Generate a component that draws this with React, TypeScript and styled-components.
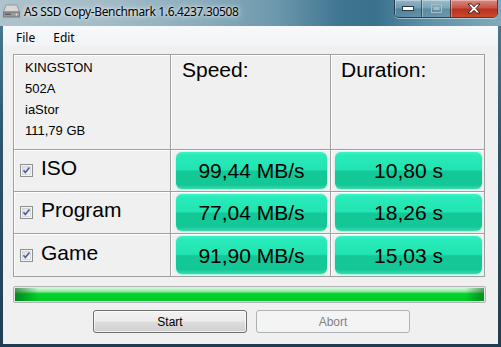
import styled, { createGlobalStyle } from 'styled-components'

const GlobalStyle = createGlobalStyle`
  html, body {
    margin: 0;
    padding: 0;
    overflow: hidden;
  }
  body {
    width: 501px;
    height: 347px;
    font-family: "Liberation Sans", Arial, sans-serif;
  }
`

const Window = styled.div`
  width: 501px;
  height: 347px;
  display: flex;
  flex-direction: column;
  background: linear-gradient(180deg, #4f7f97 0%, #2d5670 40%, #1f3d52 100%);
`

const TitleBar = styled.div`
  height: 26px;
  flex: none;
  display: flex;
  align-items: flex-start;
  background: linear-gradient(
    90deg,
    #aec3cc 0%,
    #a3bcc7 20%,
    #8cadbc 40%,
    #6c98ad 55%,
    #3f7591 68%,
    #3a718d 75%,
    #5e91a8 85%,
    #7faabb 100%
  );
`

const AppIcon = styled.svg`
  margin: 4px 4px 0 3px;
  flex: none;
`

const Title = styled.div`
  margin-top: 4px;
  font-family: "Noto Sans", "Open Sans", sans-serif;
  font-size: 12px;
  line-height: 16px;
  color: #000;
  letter-spacing: -0.35px;
  text-shadow: 0 0 6px rgba(255, 255, 255, 0.9), 0 0 3px rgba(255, 255, 255, 0.8);
`

const CaptionGroup = styled.div`
  margin-left: auto;
  margin-right: 3px;
  display: flex;
  height: 17px;
  border: 1px solid rgba(20, 40, 55, 0.75);
  border-top: none;
  border-radius: 0 0 5px 5px;
  overflow: hidden;
  box-shadow: 0 1px 0 rgba(255, 255, 255, 0.45);
`

const CaptionButton = styled.div<{ w: number; close?: boolean }>`
  width: ${({ w }) => w}px;
  height: 100%;
  display: flex;
  align-items: center;
  justify-content: center;
  background: ${({ close }) =>
    close
      ? 'linear-gradient(180deg, #d98a80 0%, #c9554a 45%, #b8321f 55%, #c8482e 100%)'
      : 'linear-gradient(180deg, rgba(200,220,230,0.55) 0%, rgba(150,185,200,0.45) 45%, rgba(90,130,150,0.45) 55%, rgba(110,150,170,0.5) 100%)'};
  box-shadow: inset 1px 1px 0 rgba(255, 255, 255, 0.35);
  & + & {
    border-left: 1px solid rgba(20, 40, 55, 0.6);
  }
`

const Client = styled.div`
  flex: 1;
  margin: 0 3px 3px 3px;
  background: #f0f0f0;
  display: flex;
  flex-direction: column;
`

const MenuBar = styled.div`
  height: 20px;
  box-sizing: border-box;
  padding: 2px 0 0 4px;
  flex: none;
  display: flex;
  align-items: center;
  background: linear-gradient(180deg, #f8f9fa 0%, #f1f3f6 100%);
  font-family: "Noto Sans", "Open Sans", sans-serif;
  font-size: 12px;
`

const MenuItem = styled.span`
  padding: 0 9px;
  color: #000;
`

const Content = styled.div`
  display: flex;
  flex-direction: column;
  padding: 8px 12px 11px 10px;
`

const Table = styled.div`
  display: grid;
  grid-template-columns: 156px 159px 153px;
  grid-template-rows: 94px 41px 41px 42px;
  gap: 1px;
  padding: 1px;
  width: 472px;
  box-sizing: border-box;
  background: #a0a0a0;
`

const Cell = styled.div`
  background: #f0f0f0;
  box-shadow: inset 1px 1px 0 #ffffff;
  display: flex;
  align-items: center;
  min-width: 0;
`

const InfoCell = styled(Cell)`
  flex-direction: column;
  align-items: flex-start;
  padding: 2px 0 0 11px;
  font-size: 13px;
  line-height: 21px;
  color: #000;
`

const HeaderCell = styled(Cell)<{ pad: number }>`
  align-items: flex-start;
  padding: 3px 0 0 ${({ pad }) => pad}px;
  font-size: 21px;
  line-height: 24px;
  color: #000;
`

const LabelCell = styled(Cell)`
  padding-left: 6px;
  gap: 8px;
  font-size: 21px;
  color: #000;
`

const LabelText = styled.span`
  margin-bottom: 5px;
`

const ValueCell = styled(Cell)<{ l: number; r: number }>`
  align-items: stretch;
  padding: 2px ${({ r }) => r}px 2px ${({ l }) => l}px;
`

const Pill = styled.div`
  flex: 1;
  display: flex;
  align-items: center;
  justify-content: center;
  border-radius: 6px;
  font-size: 21px;
  color: #000;
  padding-top: 1px;
  background: linear-gradient(
    180deg,
    #3af3c8 0%,
    #27ebb9 10%,
    #22e4b2 48%,
    #13c898 52%,
    #14c797 88%,
    #3ad9ad 100%
  );
  box-shadow: 0 1px 1px rgba(150, 255, 225, 0.9), 0 0 1px rgba(40, 200, 160, 0.6);
`

const Progress = styled.div`
  margin-top: 9px;
  width: 473px;
  height: 17px;
  box-sizing: border-box;
  border: 1px solid #b4b4b4;
  border-radius: 2px;
  background: #e6e6e6;
  padding: 1px;
`

const ProgressFill = styled.div`
  height: 100%;
  background:
    linear-gradient(90deg, rgba(0, 90, 20, 0.6) 0%, rgba(0, 90, 20, 0) 5%, rgba(0, 90, 20, 0) 96%, rgba(0, 90, 20, 0.55) 100%),
    linear-gradient(180deg, #d2f6d6 0%, #98eaa6 25%, #00d12a 45%, #00cc28 100%);
`

const ButtonRow = styled.div`
  margin-top: 7px;
  display: flex;
  gap: 9px;
  padding-left: 80px;
`

const Button = styled.button<{ disabled?: boolean }>`
  width: 154px;
  height: 23px;
  box-sizing: border-box;
  border-radius: 3px;
  font-family: "Liberation Sans", Arial, sans-serif;
  font-size: 12px;
  padding: 0;
  border: 1px solid ${({ disabled }) => (disabled ? '#adb2b5' : '#707070')};
  color: ${({ disabled }) => (disabled ? '#838383' : '#000')};
  background: ${({ disabled }) =>
    disabled
      ? '#f4f4f4'
      : 'linear-gradient(180deg, #f2f2f2 0%, #ebebeb 48%, #dddddd 52%, #cfcfcf 100%)'};
  box-shadow: ${({ disabled }) => (disabled ? 'none' : 'inset 0 0 0 1px rgba(255,255,255,0.7)')};
`

const Check = () => (
  <svg width="13" height="13" viewBox="0 0 13 13">
    <defs>
      <linearGradient id="cbg" x1="0" y1="0" x2="1" y2="1">
        <stop offset="0" stopColor="#dcdcdc" />
        <stop offset="1" stopColor="#fbfbfb" />
      </linearGradient>
    </defs>
    <rect x="0.5" y="0.5" width="12" height="12" fill="#f4f4f4" stroke="#8e8f8f" />
    <rect x="2.5" y="2.5" width="8" height="8" fill="url(#cbg)" stroke="#c4c6c8" strokeWidth="0.6" />
    <path d="M3.5 6.3 L5.4 8.6 L9.4 3.6" fill="none" stroke="#4a5c96" strokeWidth="1.6" />
  </svg>
)

const DriveIcon = () => (
  <AppIcon width="17" height="14" viewBox="0 0 17 14">
    <path d="M3 1 H14 L16.5 8 H0.5 Z" fill="#d7d7d7" stroke="#8a8a8a" strokeWidth="0.8" />
    <rect x="0.5" y="8" width="16" height="5" fill="#9a9a9a" stroke="#6c6c6c" strokeWidth="0.8" />
    <rect x="2" y="9.5" width="6" height="1.5" fill="#5e5e5e" />
    <circle cx="13.5" cy="10.5" r="0.9" fill="#e8e8e8" />
  </AppIcon>
)

const rows = [
  { name: 'ISO', speed: '99,44 MB/s', time: '10,80 s' },
  { name: 'Program', speed: '77,04 MB/s', time: '18,26 s' },
  { name: 'Game', speed: '91,90 MB/s', time: '15,03 s' },
]

export default function App() {
  return (
    <>
      <GlobalStyle />
      <Window>
        <TitleBar>
          <DriveIcon />
          <Title>AS SSD Copy-Benchmark 1.6.4237.30508</Title>
          <CaptionGroup>
            <CaptionButton w={26}>
              <svg width="12" height="5" viewBox="0 0 12 5">
                <rect x="0.5" y="0.5" width="11" height="4" fill="#fff" stroke="#2b3b48" />
              </svg>
            </CaptionButton>
            <CaptionButton w={28}>
              <svg width="11" height="9" viewBox="0 0 11 9">
                <rect x="0.5" y="0.5" width="10" height="8" fill="none" stroke="#a9bcc6" />
                <rect x="2.5" y="3" width="6" height="3" fill="#a9bcc6" />
              </svg>
            </CaptionButton>
            <CaptionButton w={46} close>
              <svg width="14" height="11" viewBox="0 0 14 11">
                <path
                  d="M1 1 H4.5 L7 3.8 L9.5 1 H13 L9 5.5 L13 10 H9.5 L7 7.2 L4.5 10 H1 L5 5.5 Z"
                  fill="#fff"
                  stroke="#3a1410"
                  strokeWidth="0.9"
                  strokeLinejoin="round"
                />
              </svg>
            </CaptionButton>
          </CaptionGroup>
        </TitleBar>
        <Client>
          <MenuBar>
            <MenuItem>File</MenuItem>
            <MenuItem>Edit</MenuItem>
          </MenuBar>
          <Content>
            <Table>
              <InfoCell>
                <span>KINGSTON</span>
                <span>502A</span>
                <span>iaStor</span>
                <span>111,79 GB</span>
              </InfoCell>
              <HeaderCell pad={11}>Speed:</HeaderCell>
              <HeaderCell pad={10}>Duration:</HeaderCell>
              {rows.map((row) => [
                <LabelCell key={row.name + '-l'}>
                  <Check />
                  <LabelText>{row.name}</LabelText>
                </LabelCell>,
                <ValueCell key={row.name + '-s'} l={5} r={3}>
                  <Pill>{row.speed}</Pill>
                </ValueCell>,
                <ValueCell key={row.name + '-t'} l={4} r={2}>
                  <Pill>{row.time}</Pill>
                </ValueCell>,
              ])}
            </Table>
            <Progress>
              <ProgressFill />
            </Progress>
            <ButtonRow>
              <Button>Start</Button>
              <Button disabled>Abort</Button>
            </ButtonRow>
          </Content>
        </Client>
      </Window>
    </>
  )
}
